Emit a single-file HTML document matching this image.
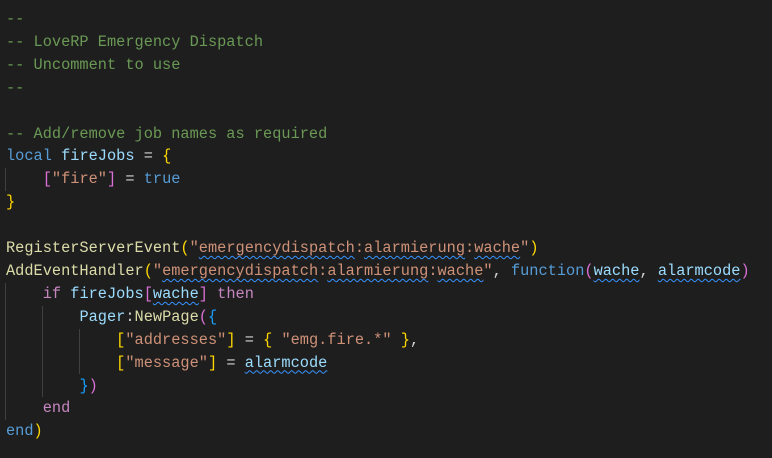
<!DOCTYPE html>
<html><head><style>
html,body{margin:0;padding:0;background:#1e1e1e;width:772px;height:458px;overflow:hidden}
pre{margin:0;position:absolute;left:6px;top:8px;font-family:"Liberation Mono",monospace;font-size:15.3px;line-height:22.9px;color:#d4d4d4;white-space:pre}
.c{color:#6a9955}.k{color:#569cd6}.v{color:#9cdcfe}.f{color:#dcdcaa}.s{color:#ce9178}.g{color:#ffd700}.p{color:#da70d6}.b{color:#179fff}.ctl{color:#c586c0}
.w{text-decoration:underline wavy #3794ff;text-decoration-thickness:1px;text-underline-offset:3px}
.guide{position:absolute;width:1px;background:#404040}
</style></head><body>
<div class="guide" style="left:5px;top:168px;height:23px"></div>
<div class="guide" style="left:5px;top:283px;height:137px"></div>
<div class="guide" style="left:42px;top:306px;height:91px"></div>
<div class="guide" style="left:79px;top:329px;height:45px"></div>
<pre><span class="c">--
-- LoveRP Emergency Dispatch
-- Uncomment to use
--</span>

<span class="c">-- Add/remove job names as required</span>
<span class="k">local</span> <span class="v">fireJobs</span> = <span class="g">{</span>
    <span class="p">[</span><span class="s">"fire"</span><span class="p">]</span> = <span class="k">true</span>
<span class="g">}</span>

<span class="f">RegisterServerEvent</span><span class="g">(</span><span class="s">"<span class="w">emergencydispatch</span>:<span class="w">alarmierung</span>:<span class="w">wache</span>"</span><span class="g">)</span>
<span class="f">AddEventHandler</span><span class="g">(</span><span class="s">"<span class="w">emergencydispatch</span>:<span class="w">alarmierung</span>:<span class="w">wache</span>"</span>, <span class="k">function</span><span class="p">(</span><span class="v w">wache</span>, <span class="v w">alarmcode</span><span class="p">)</span>
    <span class="ctl">if</span> <span class="v">fireJobs</span><span class="p">[</span><span class="v w">wache</span><span class="p">]</span> <span class="ctl">then</span>
        <span class="v">Pager</span>:<span class="f">NewPage</span><span class="p">(</span><span class="b">{</span>
            <span class="g">[</span><span class="s">"addresses"</span><span class="g">]</span> = <span class="g">{</span> <span class="s">"emg.fire.*"</span> <span class="g">}</span>,
            <span class="g">[</span><span class="s">"message"</span><span class="g">]</span> = <span class="v w">alarmcode</span>
        <span class="b">}</span><span class="p">)</span>
    <span class="ctl">end</span>
<span class="k">end</span><span class="g">)</span></pre>
</body></html>
